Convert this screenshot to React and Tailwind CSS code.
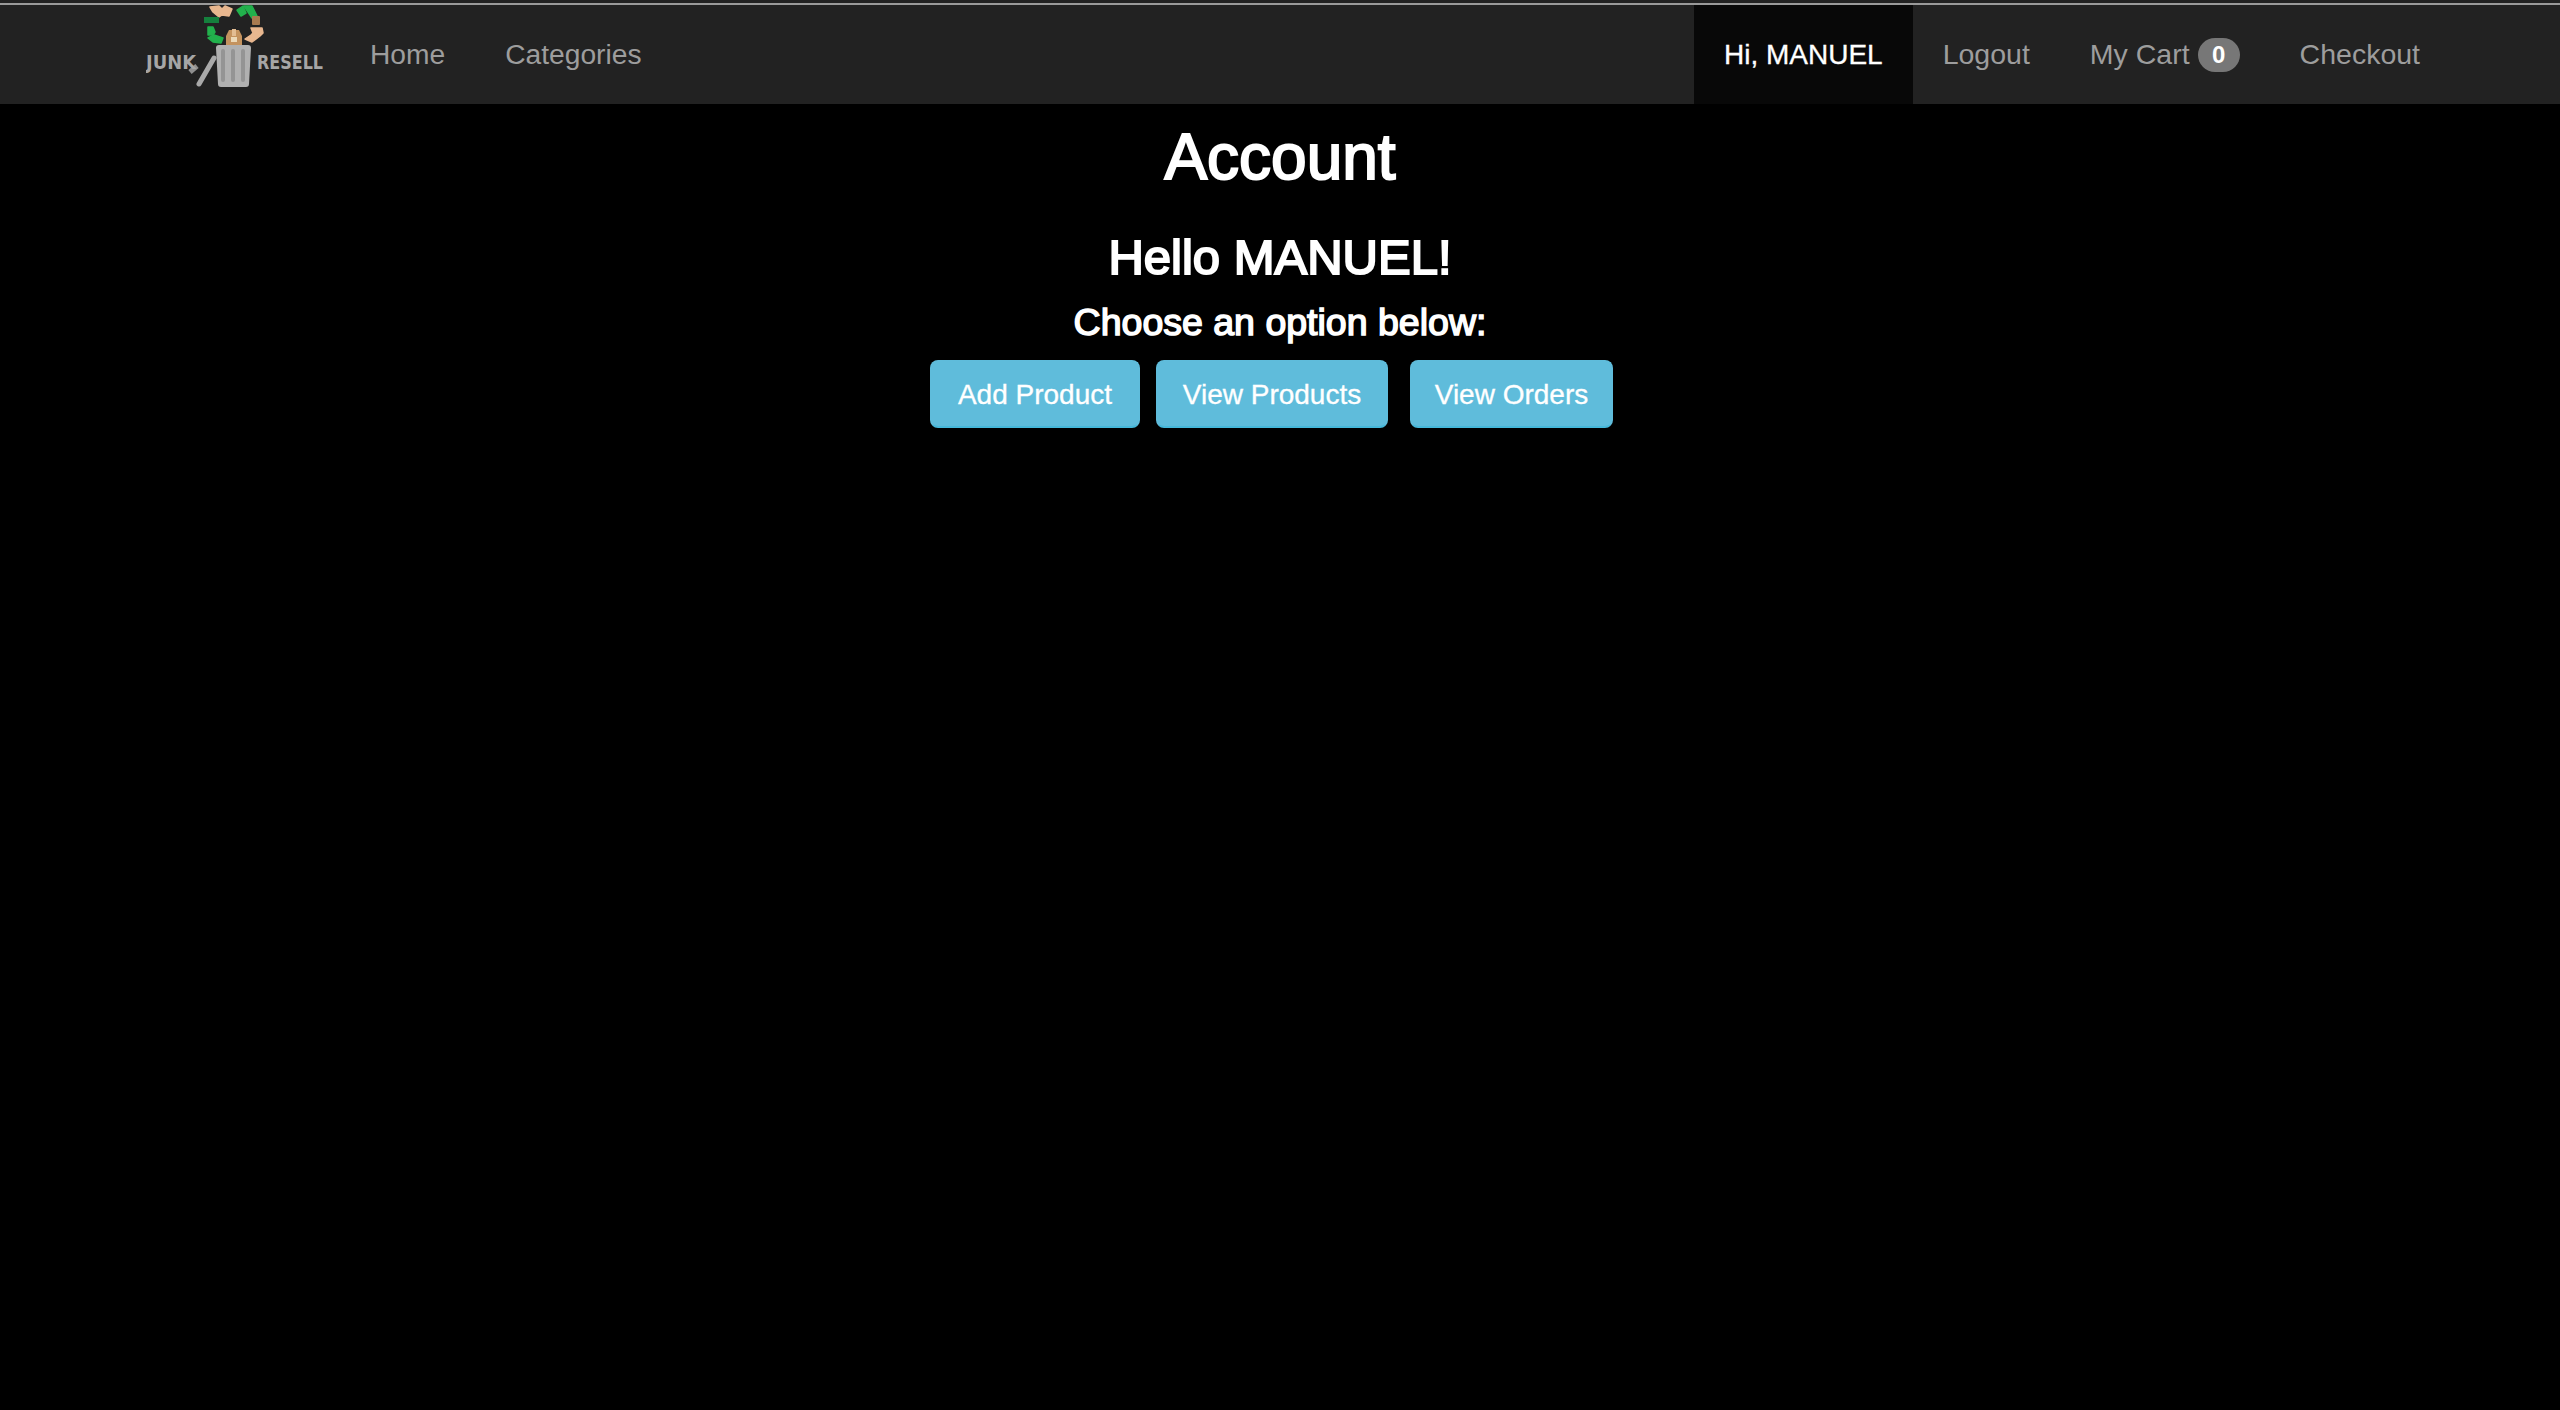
import React from 'react';

const Logo = () => (
    <svg width="184" height="90" viewBox="0 0 184 90" className="block">
        {/* recycling ring */}
        <g strokeWidth="1.5" strokeLinejoin="round">
            <path d="M64 7 l9 -1 l3 3 l3 -3 l7 3 l-3 7 l-7 -1 l-3 2 l-6 -5z" fill="#e8b78f" stroke="#e8b78f" />
            <path d="M91 10 l6 -4 l3 7 l-5 3z" fill="#22b14c" stroke="#22b14c" />
            <path d="M98 6 l8 0 l5 10 l-5 2 l-6 -9z" fill="#22b14c" stroke="#22b14c" />
            <path d="M105 28 l11 0 l1 5 l-3 3 l-8 6 l-7 -3 l6 -4 l2 -2z" fill="#e8b78f" stroke="#e8b78f" />
            <path d="M62 27 l5 0 l2 5 l-2 3 l-5 0z" fill="#22b14c" stroke="#22b14c" />
            <path d="M68 35 l9 3 l-2 5 l-8 -1 l-5 -4z" fill="#22b14c" stroke="#22b14c" />
        </g>
        <rect x="58" y="17" width="15" height="6" fill="#15803d" />
        <rect x="106" y="16" width="8" height="9" rx="1" fill="#a87a50" />
        {/* box */}
        <path d="M80 36 l3 -6 l10 0 l3 6 l0 9 l-16 0z" fill="#c4935f" />
        <rect x="86" y="29" width="4" height="7" fill="#e3bd93" />
        <rect x="85" y="37" width="6" height="5" fill="#ecd9b8" />
        {/* can */}
        <path d="M73 45 h29 a3 3 0 0 1 3 3 l-2 36 a3 3 0 0 1 -3 3 h-25 a3 3 0 0 1 -3 -3 l-2 -36 a3 3 0 0 1 3 -3z" fill="#b0b0b0" />
        <rect x="75" y="49" width="4" height="33" rx="2" fill="#949494" />
        <rect x="85" y="49" width="4" height="33" rx="2" fill="#949494" />
        <rect x="95" y="49" width="4" height="33" rx="2" fill="#949494" />
        {/* lid */}
        <path d="M53 84 l15 -26" stroke="#a9a9a9" strokeWidth="5" strokeLinecap="round" fill="none" />
        <path d="M44 72 l7 -6" stroke="#8f8f8f" strokeWidth="5" fill="none" />
        <text x="0" y="69" fontFamily="DejaVu Sans, sans-serif" fontWeight="700" fontSize="19" fill="#a6a6a6" textLength="50" lengthAdjust="spacingAndGlyphs">JUNK</text>
        <text x="111" y="69" fontFamily="DejaVu Sans, sans-serif" fontWeight="700" fontSize="19" fill="#a6a6a6" textLength="66" lengthAdjust="spacingAndGlyphs">RESELL</text>
    </svg>
);

const NavLink = ({ children, active }) => (
    <a className={active
        ? 'flex items-center px-[30px] bg-[#080808] text-white text-[28px] [-webkit-text-stroke:0.3px_white]'
        : 'flex items-center px-[30px] text-[#9d9d9d]'}>
        {children}
    </a>
);

const ActionButton = ({ children, className }) => (
    <a className={`block h-[68px] leading-[66px] text-center rounded-lg border-2 border-[#5fbcdb] border-b-[#46b8da] bg-[#5fbcdb] text-white text-[28px] [-webkit-text-stroke:0.3px_white] ${className}`}>
        {children}
    </a>
);

export default function App() {
    return (
        <div className="min-h-screen bg-black font-['Liberation_Sans',Arial,sans-serif] text-white">
            <div className="h-[3px] bg-[#222222]"></div>
            <nav className="h-[101px] border-t-2 border-[#9a9a9a] bg-[#222222]">
                <div className="mx-auto flex h-[99px] w-[2340px] justify-between">
                    <div className="flex text-[28.2px]">
                        <div className="ml-9 -mt-[5px] mr-[10px]">
                            <Logo />
                        </div>
                        <NavLink>Home</NavLink>
                        <NavLink>Categories</NavLink>
                    </div>
                    <div className="flex text-[28.5px]">
                        <NavLink active>Hi, MANUEL</NavLink>
                        <NavLink>Logout</NavLink>
                        <NavLink>
                            My Cart
                            <span className="ml-2 flex h-[34px] w-[42px] items-center justify-center rounded-full bg-[#777777] text-[24px] font-bold text-white">0</span>
                        </NavLink>
                        <NavLink>Checkout</NavLink>
                    </div>
                </div>
            </nav>
            <main className="flex flex-col items-center">
                <h1 className="mt-[18px] text-[64px] leading-[70px] [-webkit-text-stroke:2px_white]">Account</h1>
                <h2 className="mt-[39px] text-[49px] leading-[52px] [-webkit-text-stroke:2px_white]">Hello MANUEL!</h2>
                <h3 className="mt-[19px] text-[37.5px] leading-[40px] [-webkit-text-stroke:1.5px_white]">Choose an option below:</h3>
                <div className="mt-[18px] mr-[17px] flex">
                    <ActionButton className="w-[210px]">Add Product</ActionButton>
                    <ActionButton className="ml-4 w-[232px]">View Products</ActionButton>
                    <ActionButton className="ml-[22px] w-[203px]">View Orders</ActionButton>
                </div>
            </main>
        </div>
    );
}
